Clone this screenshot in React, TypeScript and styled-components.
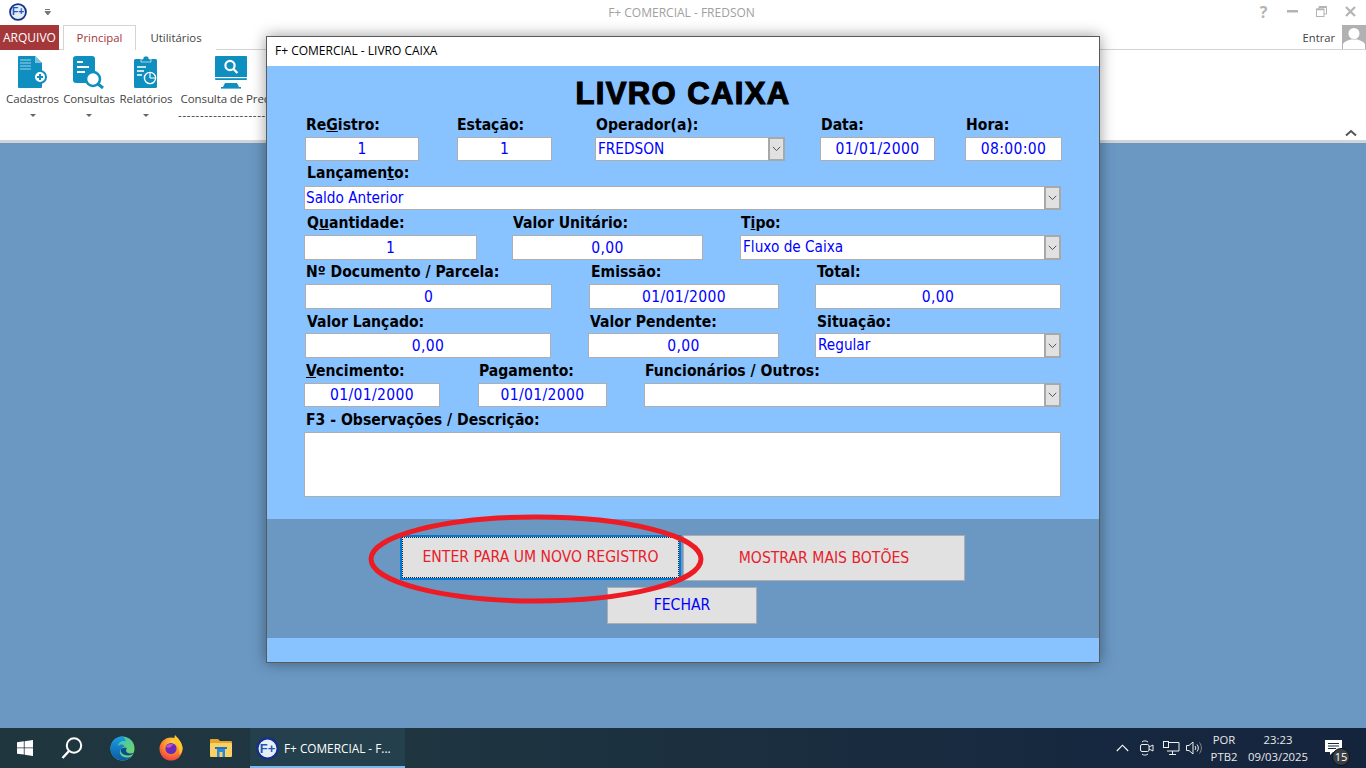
import React from 'react';
import styled, { createGlobalStyle } from 'styled-components';

const Global = createGlobalStyle`
  html, body { margin: 0; padding: 0; width: 1366px; height: 768px; overflow: hidden; }
  * { box-sizing: border-box; }
`;

const Screen = styled.div`
  position: relative; width: 1366px; height: 768px; display: flex; flex-direction: column;
  background: #6a98c3; font-family: "Open Sans", "Noto Sans", sans-serif; overflow: hidden;
`;
const TitleBar = styled.div`
  height: 25px; background: #fff; display: flex; align-items: center; position: relative; flex: none; padding-bottom: 2px;
`;
const QuickIcon = styled.div`
  width: 18px; height: 18px; margin-left: 9px; display: flex;
`;
const QuickCaret = styled.div`
  margin-left: 17px; width: 8px; height: 8px; display: flex;
`;
const AppTitle = styled.div`
  position: absolute; left: 0; width: 1363px; text-align: center; font-size: 12px; color: #a0a0a0; top: 4px;
`;
const WinButtons = styled.div`
  margin-left: auto; display: flex; margin-right: 1px;
`;
const WinButton = styled.div`
  width: 29px; height: 24px; display: flex; align-items: center; justify-content: center;
  color: #b4b4b4; font-weight: 700; font-size: 16px;
`;
const TabBar = styled.div`
  height: 25px; background: #fff; border-bottom: 1px solid #d4d4d4; display: flex; flex: none; position: relative;
`;
const FileTab = styled.div`
  width: 59px; height: 25px; background: #a4373a; color: #fff; font-size: 12px;
  display: flex; align-items: center; justify-content: center;
`;
const Tab = styled.div<{ $active?: boolean }>`
  height: 25px; margin-left: ${p => (p.$active ? '4px' : '0')}; width: ${p => (p.$active ? '73px' : '80px')};
  background: #fff; font-size: 11.4px; display: flex; align-items: center; justify-content: center;
  color: ${p => (p.$active ? '#a4373a' : '#444')}; padding-bottom: 1px;
  border: ${p => (p.$active ? '1px solid #d4d4d4' : 'none')}; border-bottom: none;
`;
const Signin = styled.div`
  margin-left: auto; display: flex; align-items: center; gap: 7px; font-size: 11.2px; color: #444; height: 24px;
`;
const Avatar = styled.div`
  width: 24px; height: 24px; background: #b1b1b1; display: flex;
`;
const Ribbon = styled.div`
  height: 93px; background: #fff; border-bottom: 3px solid #d0d5da; display: flex; flex: none; position: relative;
  padding-left: 6px;
`;
const RibbonItem = styled.div<{ $w: number; $gap?: number }>`
  width: ${p => p.$w}px; margin-left: ${p => p.$gap ?? 0}px; display: flex; flex-direction: column; align-items: center;
  padding-top: 6px; font-size: 11.5px; color: #444; flex: none;
`;
const RibbonIcon = styled.div`
  height: 33px; display: flex;
`;
const RibbonLabel = styled.div`
  margin-top: 1px; height: 18px; line-height: 18px; white-space: nowrap; letter-spacing: -0.1px;
`;
const RibbonCaret = styled.div`
  margin-top: 6px; width: 0; height: 0; border: 3px solid transparent; border-top: 3px solid #666;
`;
const Dashes = styled.div`
  align-self: flex-start; margin-top: 2px; margin-left: -3px; white-space: nowrap; line-height: 10px; font-size: 11.5px; letter-spacing: 0.7px; color: #333;
`;
const Collapse = styled.div`
  position: absolute; right: 9px; bottom: 3px; width: 12px; height: 8px; display: flex;
`;
const Desktop = styled.div`
  flex: 1;
`;
const Taskbar = styled.div`
  height: 40px; flex: none; display: flex; align-items: stretch; color: #fff;
  background: linear-gradient(90deg, #20363f 0%, #1f3540 30%, #16283f 80%, #14243d 100%);
`;
const TaskCell = styled.div<{ $shift?: number }>`
  width: 49px; display: flex; align-items: center; justify-content: center; flex: none;
  padding-right: ${p => p.$shift ?? 0}px;
`;
const ActiveApp = styled.div`
  margin-left: 5px; width: 155px; display: flex; align-items: center; gap: 5px; padding-left: 6px;
  background: #24404c; border-bottom: 2px solid #76b9ed; font-size: 11.8px; white-space: nowrap; padding-top: 2px;
`;
const Tray = styled.div`
  margin-left: auto; display: flex;
`;
const TrayCell = styled.div<{ $w: number }>`
  width: ${p => p.$w}px; display: flex; flex-direction: column; align-items: center; justify-content: center;
  font-size: 11.3px; line-height: 17px; color: #e8e8e8;
`;
const NotifCell = styled.div`
  width: 54px; position: relative; padding: 12px 0 0 13px; display: flex; align-items: flex-start;
`;
const NotifBadge = styled.div`
  position: absolute; left: 20px; top: 20px; width: 18px; height: 18px; border-radius: 50%; background: #3a3f45;
  border: 1px solid #111; color: #fff; font-size: 11px; line-height: 16px; text-align: center;
`;

const Dialog = styled.div`
  position: absolute; left: 266px; top: 36px; width: 834px; height: 627px; border: 1px solid #5a5a5a;
  display: flex; flex-direction: column; box-shadow: 0 0 14px rgba(0,0,0,.4); background: #88c2ff;
`;
const DialogTitle = styled.div`
  height: 29px; background: #fff; flex: none; font-size: 12px; color: #000; display: flex; align-items: center; padding-left: 8px; padding-bottom: 2px;
  font-family: "Open Sans", sans-serif;
`;
const Form = styled.div`
  height: 453px; flex: none; padding: 0 0 0 37px; font-family: "DejaVu Sans Condensed", "DejaVu Sans", sans-serif;
`;
const Heading = styled.h1`
  margin: 0; height: 47px; padding-top: 10px; padding-right: 37px; text-align: center; font-size: 31px; line-height: 36px; font-weight: 900; color: #000;
  font-family: "Liberation Sans", sans-serif; -webkit-text-stroke: 1.2px #000; letter-spacing: 1.4px;
`;
const Label = styled.label<{ $x?: number; $h?: number }>`
  display: block; height: ${p => p.$h ?? 24}px; line-height: 22px; font-size: 15.6px; font-weight: 700; color: #000; white-space: nowrap; padding-left: ${p => p.$x ?? 2}px;
`;
const Row = styled.div<{ $h?: number; $labelY?: number }>`
  display: flex; align-items: flex-start; height: ${p => p.$h ?? 49}px;
  ${Label} { padding-top: ${p => p.$labelY ?? 0}px; }
`;
const Field = styled.div<{ $w: number; $x: number }>`
  width: ${p => p.$w}px; margin-left: ${p => p.$x}px; flex: none; display: flex; flex-direction: column;
`;
const Input = styled.input<{ $h?: number }>`
  display: block; width: 100%; height: ${p => p.$h ?? 24}px; border: 1px solid #aeaeae; background: #fff; color: #0000ff; outline: none; padding: 0;
  text-align: center; font: 15.5px "DejaVu Sans Condensed", "DejaVu Sans", sans-serif; letter-spacing: 0.35px;
`;
const Memo = styled.textarea`
  display: block; width: 100%; height: 65px; border: 1px solid #aeaeae; background: #fff; resize: none; outline: none; padding: 0;
`;
const Combo = styled.div<{ $h?: number }>`
  width: 100%; height: ${p => p.$h ?? 24}px; border: 1px solid #aeaeae; background: #fff; color: #0000ff; display: flex; align-items: stretch;
  font-size: 15.2px; line-height: 22px;
`;
const ComboText = styled.div<{ $x?: number }>`
  flex: 1; padding-left: ${p => p.$x ?? 2}px; white-space: nowrap;
`;
const ComboArrow = styled.div`
  width: 17px; background: #e1e1e1; border: 2px solid #a8a8a8; margin: -1px -1px -1px 0; display: flex; align-items: center; justify-content: center;
`;
const Band = styled.div`
  height: 119px; flex: none; background: #6a98c3; padding: 16px 0 0 133px; position: relative;
`;
const ButtonRow = styled.div`
  display: flex; gap: 2px;
`;
const ActionButton = styled.button<{ $w: number; $h: number; $focus?: boolean; $blue?: boolean; $x?: number }>`
  width: ${p => p.$w}px; height: ${p => p.$h}px; margin-left: ${p => p.$x ?? 0}px; margin-top: ${p => (p.$blue ? '6px' : '0')};
  display: block; padding: 0 0 1px; background: #e1e1e1; font: 15.6px "DejaVu Sans Condensed", "DejaVu Sans", sans-serif;
  color: ${p => (p.$blue ? '#0000ff' : '#e8202a')};
  border: ${p => (p.$focus ? '2px solid #0078d7' : '1.5px solid #adadad')};
  ${p => (p.$focus ? 'outline: 1px dotted #222; outline-offset: -3px;' : '')}
`;
const Circle = styled.svg`
  position: absolute; left: 101px; top: -6px; width: 336px; height: 92px; pointer-events: none;
`;
const Strip = styled.div`
  flex: 1; background: #88c2ff;
`;

const Chevron = () => (
  <svg width="9" height="6" viewBox="0 0 9 6"><path d="M.8.8 4.5 4.6 8.2.8" fill="none" stroke="#555" strokeWidth="1" /></svg>
);

const FPlus = ({ size, light }: { size: number; light?: boolean }) => (
  <svg width={size} height={size} viewBox="0 0 24 24">
    <circle cx="12" cy="12" r="10.6" fill={light ? '#e8eef5' : '#e3ecf7'} stroke="#12308c" strokeWidth="2.4" />
    <text x="12" y="16.5" textAnchor="middle" fontSize="13.5" fontWeight="700" fill="#1d58b8" fontFamily="Liberation Sans, sans-serif">F+</text>
  </svg>
);

const DocPlus = () => (
  <svg width="30" height="33" viewBox="0 0 30 33">
    <path d="M1 0h16l7 7v24a1 1 0 0 1-1 1H1a1 1 0 0 1-1-1V1a1 1 0 0 1 1-1z" fill="#0e8fbf" />
    <path d="M17 0v7h7z" fill="#7cc4de" />
    <path d="M2 4h11M2 7h11M2 10h11M2 13h11" stroke="#9fd4e8" strokeWidth="1.2" />
    <circle cx="22" cy="21" r="6" fill="#fff" stroke="#0e8fbf" strokeWidth="2" />
    <path d="M19 21h6M22 18v6" stroke="#0e8fbf" strokeWidth="2" />
  </svg>
);
const DocSearch = () => (
  <svg width="32" height="33" viewBox="0 0 32 33">
    <rect x="0" y="0" width="22" height="27" rx="3" fill="#0e8fbf" />
    <path d="M4 6h6M4 11h12M4 16h8" stroke="#fff" strokeWidth="2" />
    <circle cx="20" cy="23" r="7" fill="#fff" stroke="#0e8fbf" strokeWidth="2.6" />
    <path d="M25 28l5 4" stroke="#0e8fbf" strokeWidth="3" />
  </svg>
);
const Clipboard = () => (
  <svg width="24" height="33" viewBox="0 0 24 33">
    <rect x="0" y="3" width="23" height="29" rx="1.5" fill="#0e8fbf" />
    <path d="M7 3h2a3 3 0 0 1 6 0h2v3H7z" fill="#0e8fbf" stroke="#fff" strokeWidth=".6" />
    <path d="M3 11h9M3 15h7M3 19h5" stroke="#fff" strokeWidth="1.4" />
    <circle cx="16" cy="22" r="5.6" fill="#0e8fbf" stroke="#fff" strokeWidth="1.4" />
    <path d="M16 22v-5M16 22h5" stroke="#fff" strokeWidth="1.2" />
  </svg>
);
const Monitor = () => (
  <svg width="32" height="33" viewBox="0 0 32 33">
    <rect x="0" y="0" width="32" height="24" rx="1" fill="#0e8fbf" />
    <rect x="0" y="21" width="32" height="1.2" fill="#fff" />
    <path d="M10 27h12l2 4H8z" fill="#0e8fbf" />
    <rect x="6" y="31" width="20" height="1.6" fill="#0e8fbf" />
    <circle cx="15" cy="9.5" r="4.6" fill="none" stroke="#fff" strokeWidth="2.2" />
    <path d="M18.4 13l4 4" stroke="#fff" strokeWidth="2.4" />
  </svg>
);

const WinLogo = () => (
  <svg width="16" height="16" viewBox="0 0 16 16" fill="#fff">
    <path d="M0 2.3 6.8 1.3v6.2H0zM7.6 1.2 16 0v7.5H7.6zM0 8.3h6.8v6.3L0 13.7zM7.6 8.3H16V16l-8.4-1.2z" />
  </svg>
);
const SearchIcon = () => (
  <svg width="24" height="24" viewBox="0 0 24 24" fill="none" stroke="#fff">
    <circle cx="14" cy="9.5" r="7.2" strokeWidth="2" />
    <path d="M9 15 2.5 22" strokeWidth="2.4" />
  </svg>
);
const EdgeIcon = () => (
  <svg width="25" height="25" viewBox="0 0 25 25">
    <defs>
      <linearGradient id="edgeA" x1="0" y1="0" x2="1" y2="1"><stop offset="0" stopColor="#2fc0cf" /><stop offset="1" stopColor="#7ed957" /></linearGradient>
      <linearGradient id="edgeB" x1="0" y1="0" x2="0" y2="1"><stop offset="0" stopColor="#1b9de2" /><stop offset="1" stopColor="#0c5aa6" /></linearGradient>
    </defs>
    <circle cx="12.5" cy="12.5" r="12" fill="url(#edgeA)" />
    <path d="M12 .5C5 .8.5 6.5.5 12.5.5 19.5 6 24.5 12.5 24.5c4 0 7-1.6 9-4-3.5 1.8-9 1.4-11-2.2-1.6-3 .3-6.5 4-7.8-1-3-5-2.2-7-0.5C9 6 12 4 16 5.5 15 2.5 13.5 1 12 .5z" fill="url(#edgeB)" />
    <path d="M11 13c-1.5 3.5 2.5 6.5 7 6.5 2.5 0 5-1 6-3-3 2-8 1-8-2 0-1 .5-2 1-2.5-2-.5-5 0-6 1z" fill="#0a4d8c" />
  </svg>
);
const FirefoxIcon = () => (
  <svg width="25" height="26" viewBox="0 0 25 26">
    <defs>
      <radialGradient id="ffA" cx=".6" cy=".2" r=".9"><stop offset="0" stopColor="#ffd33d" /><stop offset=".5" stopColor="#ff8a2b" /><stop offset="1" stopColor="#e8304d" /></radialGradient>
    </defs>
    <circle cx="12" cy="14" r="11.5" fill="url(#ffA)" />
    <path d="M16 0c3 3 7 7 7.5 13 .2 2-1 5-3 7 0-6-2-11-4.5-13-1-2-.8-5 0-7z" fill="#ffc62e" />
    <circle cx="12" cy="13.5" r="5.6" fill="#6a2ab8" />
    <path d="M7 12c1-3 5-4 8-2-2 0-3 1-3 2-2 1-3 1-5 0z" fill="#c04fd0" />
  </svg>
);
const FolderIcon = () => (
  <svg width="22" height="18" viewBox="0 0 22 18">
    <path d="M0 1a1 1 0 0 1 1-1h7l2 2h11a1 1 0 0 1 1 1v2H0z" fill="#e4a52c" />
    <rect y="4" width="22" height="14" rx="1" fill="#fad165" />
    <path d="M7 9h8v9h-2.5v-5h-3v5H7z" fill="#2b88d8" />
    <rect x="5" y="8" width="12" height="2" fill="#1f75c0" />
  </svg>
);

const TrayChevron = () => (
  <svg width="13" height="8" viewBox="0 0 13 8"><path d="M.8 7 6.5 1.2 12.2 7" fill="none" stroke="#fff" strokeWidth="1.1" /></svg>
);
const MeetIcon = () => (
  <svg width="14" height="18" viewBox="0 0 14 18" fill="none" stroke="#eee" strokeWidth="1">
    <rect x=".5" y="5.5" width="8.5" height="7" rx="1.5" />
    <path d="M9 8l4-2v6l-4-2M2 3c1.5-1.5 4-1.5 6 0M2 15c1.5 1.5 4 1.5 6 0" />
  </svg>
);
const NetIcon = () => (
  <svg width="17" height="15" viewBox="0 0 17 15" fill="none" stroke="#eee" strokeWidth="1">
    <path d="M5 1.5h11v8.5H4M9.5 10v3.5M6 13.5h7" />
    <rect x=".5" y=".5" width="5" height="6" />
  </svg>
);
const VolIcon = () => (
  <svg width="16" height="14" viewBox="0 0 16 14" fill="none" stroke="#eee" strokeWidth="1">
    <path d="M.5 4.5H3L7 1v12L3 9.5H.5zM9 5c1 1 1 3 0 4M11 3.5c1.8 2 1.8 5 0 7" />
    <path d="M13.5 1.5c2.5 3 2.500 8 0 11" stroke="#888" />
  </svg>
);
const NotifIcon = () => (
  <svg width="17" height="15" viewBox="0 0 17 15">
    <path d="M0 0h17v12H8l-3 3v-3H0z" fill="#fff" />
    <path d="M3 3.5h11M3 6h11M3 8.5h8" stroke="#16283f" strokeWidth="1" />
  </svg>
);

const App = () => (
  <Screen>
    <Global />
    <TitleBar>
      <QuickIcon><FPlus size={18} /></QuickIcon>
      <QuickCaret>
        <svg width="8" height="8" viewBox="0 0 8 8"><path d="M1 1.5h5M1 3.5h5.500L3.800 7z" stroke="#777" strokeWidth="1" fill="#777" /></svg>
      </QuickCaret>
      <AppTitle>F+ COMERCIAL - FREDSON</AppTitle>
      <WinButtons>
        <WinButton>?</WinButton>
        <WinButton>
          <svg width="11" height="3" viewBox="0 0 11 3"><rect width="11" height="2.5" fill="#b4b4b4" /></svg>
        </WinButton>
        <WinButton>
          <svg width="11" height="11" viewBox="0 0 11 11" fill="none" stroke="#b4b4b4"><rect x=".5" y="3" width="7.5" height="7.5" /><path d="M3 3V.5h7.5V8H8" /><path d="M.5 3.6H8M3 1.3h7.5" strokeWidth="1.5" /></svg>
        </WinButton>
        <WinButton>
          <svg width="11" height="11" viewBox="0 0 11 11"><path d="M1 1l9 9M10 1l-9 9" stroke="#b4b4b4" strokeWidth="2.2" /></svg>
        </WinButton>
      </WinButtons>
    </TitleBar>
    <TabBar>
      <FileTab>ARQUIVO</FileTab>
      <Tab $active>Principal</Tab>
      <Tab>Utilitários</Tab>
      <Signin>
        Entrar
        <Avatar>
          <svg width="24" height="24" viewBox="0 0 24 24"><circle cx="12" cy="8.5" r="5.5" fill="#fff" /><path d="M1 24v-4c0-3 4-4 7.5-5.5h7C19 16 23 17 23 20v4z" fill="#fff" /></svg>
        </Avatar>
      </Signin>
    </TabBar>
    <Ribbon>
      <RibbonItem $w={53}><RibbonIcon><DocPlus /></RibbonIcon><RibbonLabel>Cadastros</RibbonLabel><RibbonCaret /></RibbonItem>
      <RibbonItem $w={52} $gap={4}><RibbonIcon><DocSearch /></RibbonIcon><RibbonLabel>Consultas</RibbonLabel><RibbonCaret /></RibbonItem>
      <RibbonItem $w={52} $gap={5}><RibbonIcon><Clipboard /></RibbonIcon><RibbonLabel>Relatórios</RibbonLabel><RibbonCaret /></RibbonItem>
      <RibbonItem $w={100} $gap={9}>
        <RibbonIcon><Monitor /></RibbonIcon>
        <RibbonLabel>Consulta de Preços</RibbonLabel>
        <Dashes>--------------------------</Dashes>
      </RibbonItem>
      <Collapse>
        <svg width="12" height="8" viewBox="0 0 12 8"><path d="M1 6.5 6 2l5 4.5" fill="none" stroke="#555" strokeWidth="2" /></svg>
      </Collapse>
    </Ribbon>
    <Desktop />
    <Taskbar>
      <TaskCell><WinLogo /></TaskCell>
      <TaskCell $shift={3}><SearchIcon /></TaskCell>
      <TaskCell><EdgeIcon /></TaskCell>
      <TaskCell><FirefoxIcon /></TaskCell>
      <TaskCell><FolderIcon /></TaskCell>
      <ActiveApp><FPlus size={23} light />F+ COMERCIAL - F...</ActiveApp>
      <Tray>
        <TrayCell $w={23}><TrayChevron /></TrayCell>
        <TrayCell $w={26}><MeetIcon /></TrayCell>
        <TrayCell $w={23}><NetIcon /></TrayCell>
        <TrayCell $w={21}><VolIcon /></TrayCell>
        <TrayCell $w={40}><span>POR</span><span>PTB2</span></TrayCell>
        <TrayCell $w={68}><span>23:23</span><span>09/03/2025</span></TrayCell>
        <NotifCell><NotifIcon /><NotifBadge>15</NotifBadge></NotifCell>
      </Tray>
    </Taskbar>

    <Dialog>
      <DialogTitle>F+ COMERCIAL - LIVRO CAIXA</DialogTitle>
      <Form>
        <Heading>LIVRO CAIXA</Heading>
        <Row $labelY={1}>
          <Field $w={114} $x={1}><Label $x={1}>Re<u>G</u>istro:</Label><Input readOnly value="1" /></Field>
          <Field $w={95} $x={38}><Label $x={0}>Estação:</Label><Input readOnly value="1" /></Field>
          <Field $w={190} $x={43}><Label $x={1}>Operador(a):</Label><Combo><ComboText>FREDSON</ComboText><ComboArrow><Chevron /></ComboArrow></Combo></Field>
          <Field $w={115} $x={35}><Label $x={1}>Data:</Label><Input readOnly value="01/01/2000" /></Field>
          <Field $w={97} $x={30}><Label $x={1}>Hora:</Label><Input readOnly value="08:00:00" /></Field>
        </Row>
        <Row>
          <Field $w={757} $x={0}><Label $x={3}>Lançamen<u>t</u>o:</Label><Combo><ComboText $x={1}>Saldo Anterior</ComboText><ComboArrow><Chevron /></ComboArrow></Combo></Field>
        </Row>
        <Row $labelY={1}>
          <Field $w={173} $x={0}><Label $x={3}>Q<u>u</u>antidade:</Label><Input $h={25} readOnly value="1" /></Field>
          <Field $w={191} $x={35}><Label $x={1}>Valor Unitário:</Label><Input $h={25} readOnly value="0,00" /></Field>
          <Field $w={321} $x={37}><Label $x={1}>T<u>i</u>po:</Label><Combo $h={25}><ComboText>Fluxo de Caixa</ComboText><ComboArrow><Chevron /></ComboArrow></Combo></Field>
        </Row>
        <Row $labelY={1}>
          <Field $w={247} $x={1}><Label $x={1}>Nº Documento / Parcela:</Label><Input $h={25} readOnly value="0" /></Field>
          <Field $w={190} $x={37}><Label>Emissão:</Label><Input $h={25} readOnly value="01/01/2000" /></Field>
          <Field $w={246} $x={36}><Label>Total:</Label><Input $h={25} readOnly value="0,00" /></Field>
        </Row>
        <Row $labelY={2}>
          <Field $w={246} $x={1}><Label $x={2}>Valor Lançado:</Label><Input $h={25} readOnly value="0,00" /></Field>
          <Field $w={191} $x={37}><Label>Valor Pendente:</Label><Input $h={25} readOnly value="0,00" /></Field>
          <Field $w={246} $x={36}><Label>Situação:</Label><Combo $h={25}><ComboText>Regular</ComboText><ComboArrow><Chevron /></ComboArrow></Combo></Field>
        </Row>
        <Row $labelY={2}>
          <Field $w={136} $x={0}><Label $h={25} $x={2}><u>V</u>encimento:</Label><Input readOnly value="01/01/2000" /></Field>
          <Field $w={129} $x={38}><Label $h={25} $x={1}>Pagamento:</Label><Input readOnly value="01/01/2000" /></Field>
          <Field $w={417} $x={37}><Label $h={25} $x={1}>Funcionários / Outros:</Label><Combo><ComboText /><ComboArrow><Chevron /></ComboArrow></Combo></Field>
        </Row>
        <Row $h={90} $labelY={2}>
          <Field $w={757} $x={0}><Label $h={25}>F3 - Observações / Descrição:</Label><Memo readOnly /></Field>
        </Row>
      </Form>
      <Band>
        <ButtonRow>
          <ActionButton $w={281} $h={45} $focus>ENTER PARA UM NOVO REGISTRO</ActionButton>
          <ActionButton $w={282} $h={46}>MOSTRAR MAIS BOTÕES</ActionButton>
        </ButtonRow>
        <ActionButton $w={150} $h={37} $x={207} $blue>FECHAR</ActionButton>
        <Circle viewBox="0 0 336 92">
          <ellipse cx="168" cy="46" rx="165" ry="42" fill="none" stroke="#ed1c24" strokeWidth="5" />
        </Circle>
      </Band>
      <Strip />
    </Dialog>
  </Screen>
);

export default App;
